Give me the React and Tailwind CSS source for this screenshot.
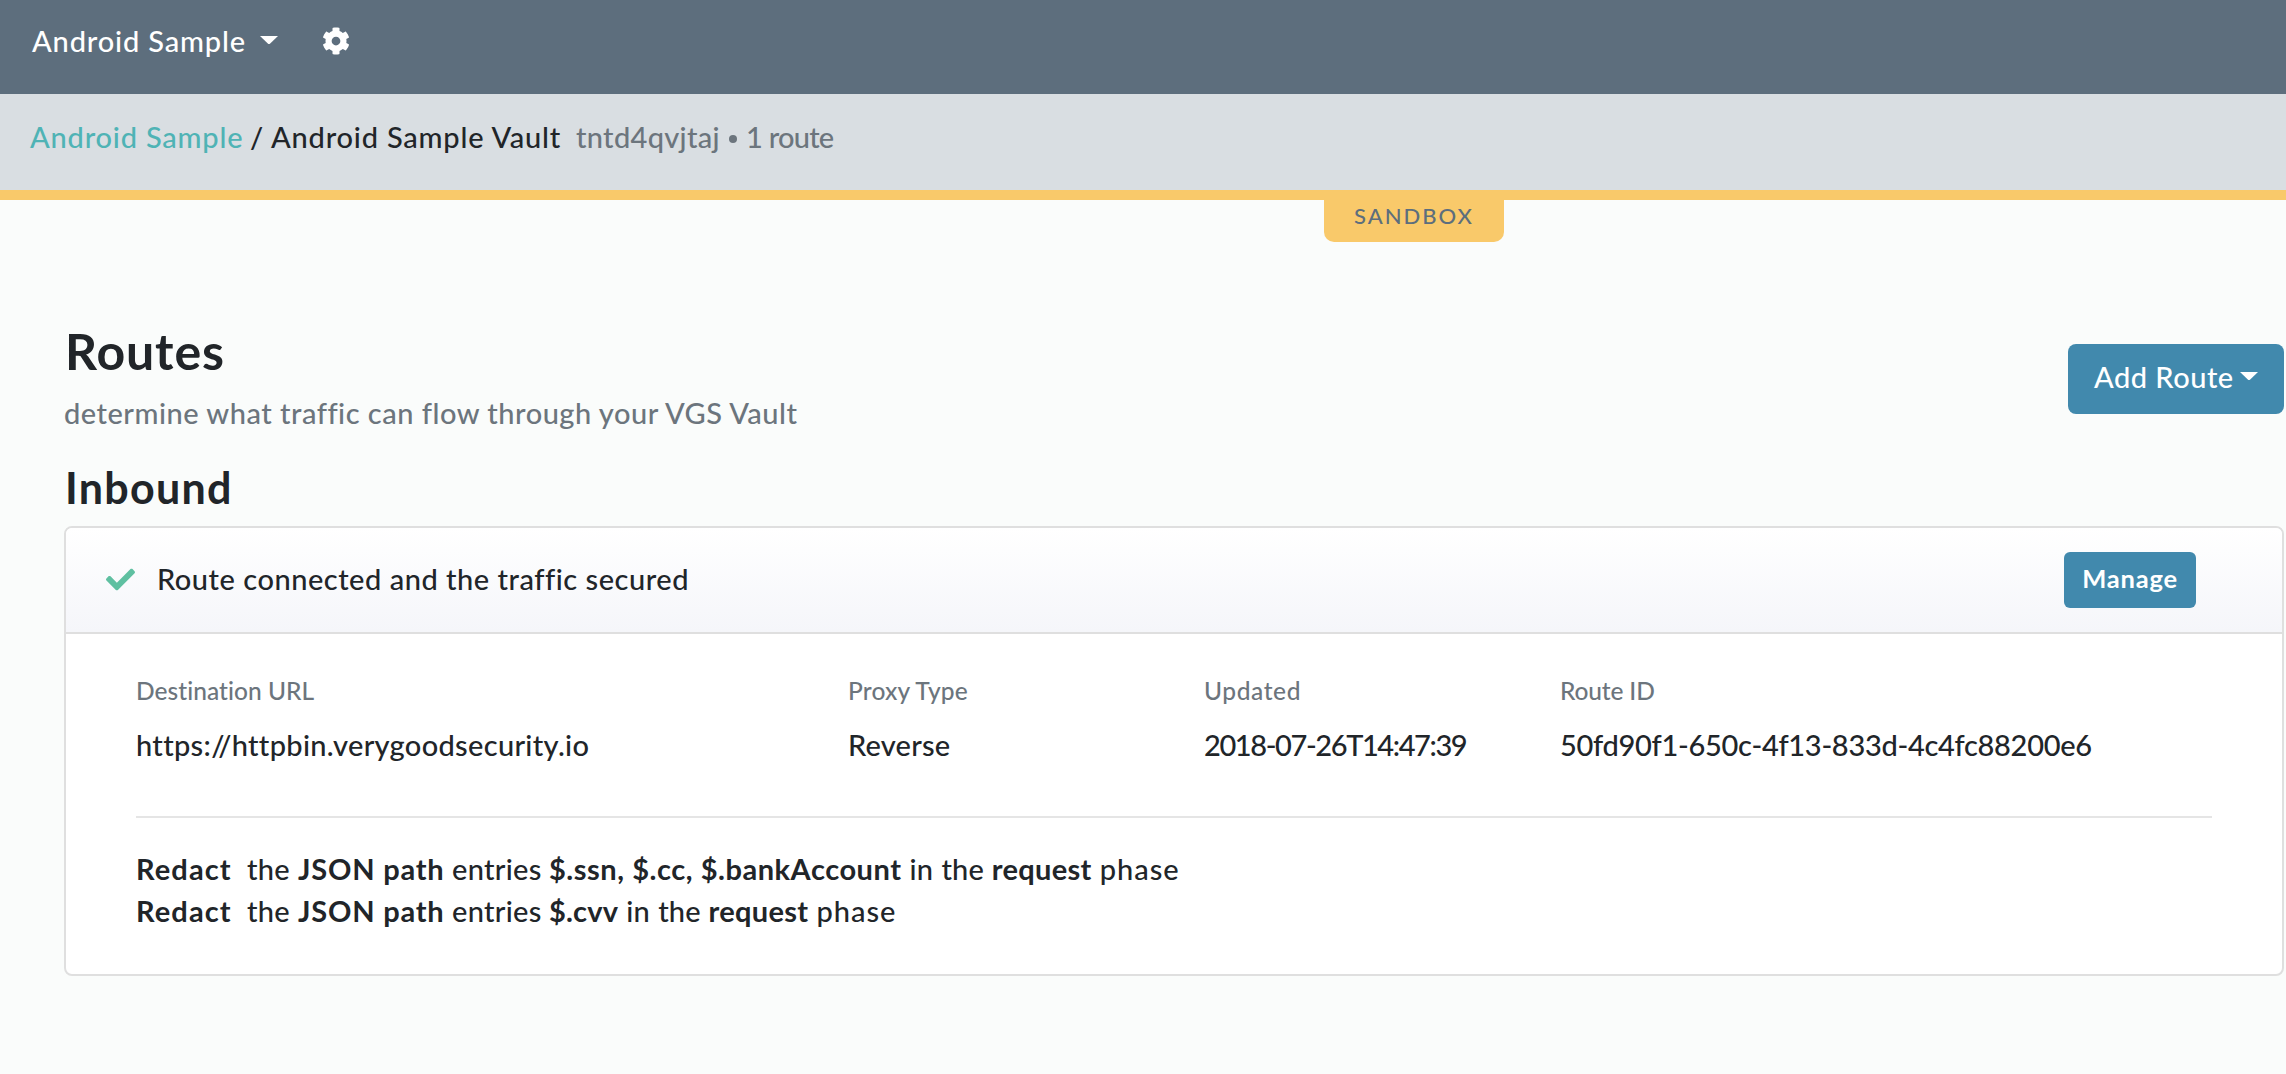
import { FaCog, FaCheck } from "react-icons/fa";

function Caret({ className }) {
  return (
    <svg viewBox="0 0 18 8" className={`w-[18px] h-2 fill-white ${className}`}>
      <path d="M0 0H18L10.2 7.4Q9 8.4 7.8 7.4Z" />
    </svg>
  );
}

const details = [
  { label: "Destination URL", value: "https://httpbin.verygoodsecurity.io", labelCls: "tracking-[0.05px]", valueCls: "tracking-[0.32px]" },
  { label: "Proxy Type", value: "Reverse", labelCls: "tracking-[0.15px]", valueCls: "tracking-[0.2px]" },
  { label: "Updated", value: "2018-07-26T14:47:39", labelCls: "tracking-[0.6px]", valueCls: "tracking-[-1.4px]" },
  { label: "Route ID", value: "50fd90f1-650c-4f13-833d-4c4fc88200e6", labelCls: "tracking-[-0.15px]", valueCls: "tracking-[-0.3px]" },
];

const rules = [
  { paths: "$.ssn, $.cc, $.bankAccount", pathsCls: "tracking-[0.54px]" },
  { paths: "$.cvv", pathsCls: "tracking-[0.2px]" },
];

export default function App() {
  return (
    <div className="w-[2286px] h-[1074px] overflow-hidden bg-[#fafcfb] text-[#212529] font-['Lato','Liberation_Sans',sans-serif] text-[29px] leading-[42px] font-medium whitespace-nowrap">
      <header className="h-[94px] bg-[#5d6e7d] text-white pt-5 pl-8 flex items-start">
        <span className="w-[228px] tracking-[0.85px]">Android Sample</span>
        <Caret className="mt-4" />
        <FaCog className="ml-11 mt-[7px] w-7 h-7" />
      </header>

      <nav className="h-24 bg-[#d9dee2] pt-[22px] pl-[30px] flex items-start">
        <a className="text-[#4fb3b5] w-[220px] tracking-[0.8px]">Android Sample</a>
        <span className="w-[21px]">/</span>
        <span className="w-[305px] tracking-[0.8px]">Android Sample Vault</span>
        <span className="text-[#6c757d] w-[153px] tracking-[0.3px]">tntd4qvjtaj</span>
        <span className="w-[17px] flex h-[42px] items-center pt-1">
          <span className="w-2 h-2 rounded-full bg-[#6c757d]" />
        </span>
        <span className="text-[#6c757d] tracking-[-0.75px]">1 route</span>
      </nav>

      <div className="h-[10px] bg-[#f9c96a]" />
      <div className="ml-[1324px] w-[180px] h-[42px] rounded-b-[10px] bg-[#f9c96a] text-[#5d6e7d] text-[22px] leading-[31px] tracking-[2px] text-center">
        SANDBOX
      </div>

      <main className="ml-16 w-[2220px] mt-[79px]">
        <div className="flex justify-between items-start">
          <div>
            <h1 className="text-[50px] leading-[60px] font-bold tracking-[0.9px] pl-px">Routes</h1>
            <p className="mt-[11px] text-[#6c757d] tracking-[0.5px]">
              determine what traffic can flow through your VGS Vault
            </p>
          </div>
          <button className="mt-[23px] w-[216px] h-[70px] rounded-lg bg-[#4189ad] text-white flex items-start pt-3 pl-[26px]">
            <span className="w-[146px] text-left tracking-[0.5px]">Add Route</span>
            <Caret className="mt-4" />
          </button>
        </div>

        <h2 className="mt-[29px] mb-[13px] pl-px text-[43px] leading-[50px] font-bold tracking-[1.3px]">Inbound</h2>

        <section className="rounded-lg border-2 border-[#dfdfdf] bg-white overflow-hidden">
          <div className="h-[106px] border-b-2 border-[#dfdfdf] bg-linear-to-b from-white to-[#f5f6fa] flex items-center pl-10 pr-[86px]">
            <FaCheck className="w-[29px] h-[29px] text-[#5fc0a1] mb-0.5" />
            <span className="ml-[22px] mb-0.5 tracking-[0.52px]">Route connected and the traffic secured</span>
            <button className="ml-auto w-[132px] h-14 rounded-md bg-[#4189ad] text-white text-[25.5px] leading-[52px] pb-1 font-bold tracking-[0.8px]">
              Manage
            </button>
          </div>

          <div className="px-[70px] pt-[39px] pb-[42px]">
            <div className="grid grid-cols-[712px_356px_356px_1fr]">
              {details.map((d) => (
                <div key={d.label}>
                  <div className={`text-[24.5px] leading-9 text-[#6c757d] ${d.labelCls}`}>{d.label}</div>
                  <div className={`mt-[15px] ${d.valueCls}`}>{d.value}</div>
                </div>
              ))}
            </div>
            <hr className="mt-[50px] mb-[30px] border-0 h-0.5 bg-[#e5e5e5]" />
            {rules.map((r) => (
              <div key={r.paths} className="flex">
                <b className="w-[111px] tracking-[1.1px]">Redact</b>
                <span className="w-[51px] tracking-[0.3px]">the</span>
                <b className="w-[154px] tracking-[0.8px]">JSON path</b>
                <span className="w-[97px] tracking-[0.3px]">entries</span>
                <b className={`mr-2 ${r.pathsCls}`}>{r.paths}</b>
                <span className="mr-2 tracking-[0.1px] [word-spacing:1px]">in the</span>
                <b className="mr-2 tracking-[0.3px]">request</b>
                <span className="tracking-[1px]">phase</span>
              </div>
            ))}
          </div>
        </section>
      </main>
    </div>
  );
}
